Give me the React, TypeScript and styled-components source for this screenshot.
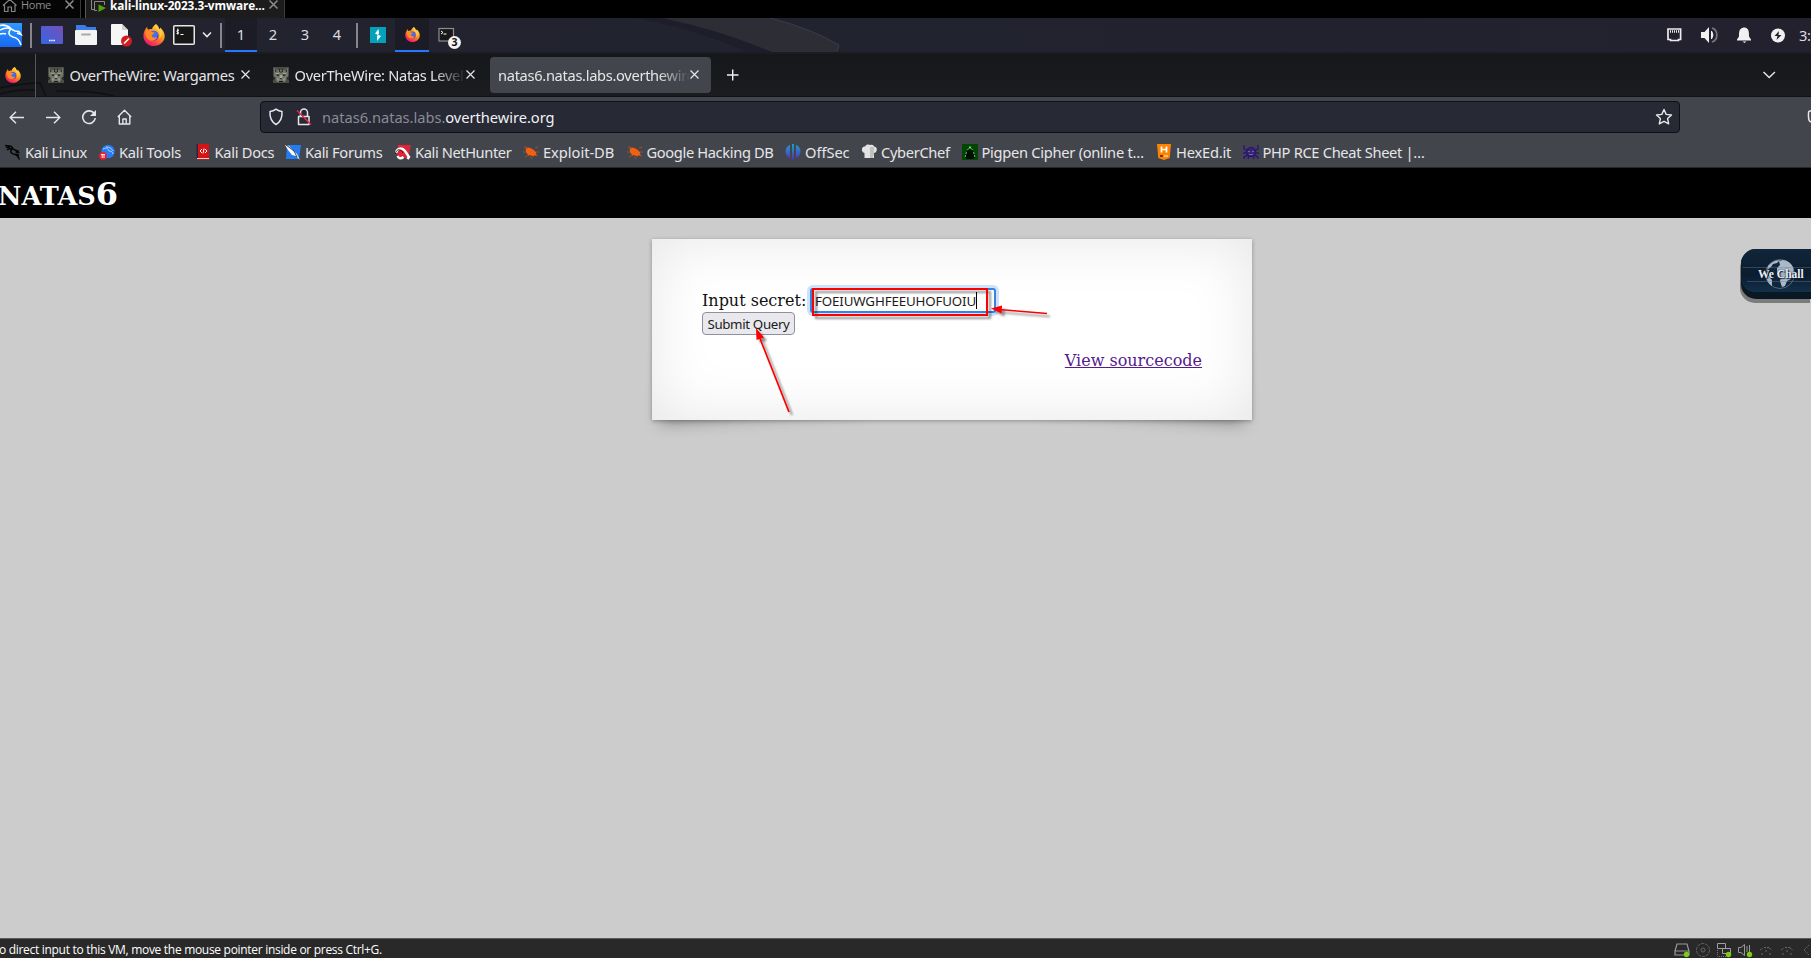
import React from "react";
import styled, { createGlobalStyle } from "styled-components";

const GlobalStyle = createGlobalStyle`
  * { box-sizing: border-box; }
  body { margin: 0; background: #cccccc; overflow: hidden; }
`;

const Screen = styled.div`
  display: flex;
  flex-direction: column;
  width: 1811px;
  height: 958px;
  overflow: hidden;
  background: #cccccc;
  font-family: "Noto Sans", sans-serif;
  svg { display: block; flex: none; }
`;

/* ---------- virtual machine window tabs ---------- */
const VmTabs = styled.div`
  display: flex;
  height: 18px;
  flex: none;
  background: #000;
`;
const VmTab = styled.div<{ $w: number; $active?: boolean }>`
  display: flex;
  align-items: flex-start;
  width: ${(p) => p.$w}px;
  height: 18px;
  background: ${(p) => (p.$active ? "#1c1c1c" : "#050505")};
  border-right: 1px solid #3a3a3a;
  border-left: ${(p) => (p.$active ? "1px solid #5a5a5a" : "0")};
  margin-right: ${(p) => (p.$active ? 0 : 4)}px;
`;
const VmLabel = styled.span<{ $bold?: boolean; $w: number }>`
  width: ${(p) => p.$w}px;
  font: ${(p) => (p.$bold ? 700 : 400)} ${(p) => (p.$bold ? 11.8 : 11)}px/10px "Open Sans", sans-serif;
  letter-spacing: ${(p) => (p.$bold ? -0.1 : -0.3)}px;
  color: ${(p) => (p.$bold ? "#fff" : "#8c8c8c")};
  white-space: nowrap;
`;

/* ---------- desktop panel ---------- */
const Panel = styled.div`
  position: relative;
  display: flex;
  align-items: center;
  height: 36px;
  flex: none;
  background: linear-gradient(90deg, #23232f, #21232f 45%, #23212e);
  border-bottom: 2px solid #1b1c21;
`;
const PanelArt = styled.svg`
  position: absolute;
  left: 620px;
  top: 0;
`;
const PanelBox = styled.div<{ $w: number; $pad?: number }>`
  display: flex;
  align-items: center;
  width: ${(p) => p.$w}px;
  padding-left: ${(p) => p.$pad ?? 0}px;
  height: 34px;
  flex: none;
`;
const Divider = styled.i`
  width: 2px;
  height: 25px;
  flex: none;
  background: #85858b;
`;
const Workspace = styled.div<{ $w: number; $active?: boolean }>`
  display: flex;
  align-items: center;
  justify-content: center;
  width: ${(p) => p.$w}px;
  height: 34px;
  font-size: 14.67px;
  color: #dcdce0;
  background: ${(p) => (p.$active ? "#1b1c26" : "transparent")};
  border-bottom: 2px solid ${(p) => (p.$active ? "#2777ff" : "transparent")};
`;
const WindowCount = styled.span`
  position: absolute;
  left: 10px;
  top: 13px;
  width: 13px;
  height: 13px;
  border-radius: 50%;
  background: #f3f3f3;
  color: #111;
  text-align: center;
  font-size: 10.5px;
  font-weight: 700;
  line-height: 13px;
`;
const WindowButton = styled.div`
  position: relative;
  width: 24px;
  height: 24px;
  margin-left: 9px;
`;
const Spacer = styled.div`
  flex: 1;
`;
const Clock = styled.span`
  width: 12px;
  font-size: 14.67px;
  letter-spacing: -0.3px;
  color: #dcdce0;
  white-space: nowrap;
`;

/* ---------- browser chrome ---------- */
const TabStrip = styled.div`
  position: relative;
  display: flex;
  align-items: center;
  height: 43px;
  flex: none;
  background: linear-gradient(#16171b, #1b1c20);
  border-bottom: 1px solid #111215;
`;
const StripArt = styled.svg`
  position: absolute;
  left: 0;
  top: 0;
`;
const PinCell = styled.div`
  position: relative;
  display: flex;
  align-items: center;
  width: 36px;
  height: 43px;
  padding-left: 5px;
  border-right: 1px solid #56575c;
`;
const Tab = styled.div<{ $w: number; $pad: number; $active?: boolean }>`
  position: relative;
  display: flex;
  align-items: center;
  width: ${(p) => p.$w}px;
  height: 36px;
  padding: 0 0 1px ${(p) => p.$pad}px;
  border-radius: 4px;
  background: ${(p) => (p.$active ? "#43454c" : "transparent")};
`;
const TabTitle = styled.span<{ $w: number; $fade?: boolean; $gap?: number }>`
  width: ${(p) => p.$w}px;
  margin-left: ${(p) => p.$gap ?? 5.5}px;
  overflow: hidden;
  white-space: nowrap;
  font-size: 14.67px;
  letter-spacing: -0.32px;
  line-height: 22px;
  color: #e6e6e8;
  mask-image: ${(p) => (p.$fade ? "linear-gradient(90deg, #000 calc(100% - 32px), transparent)" : "none")};
`;
const NavBar = styled.div`
  display: flex;
  align-items: center;
  height: 42px;
  flex: none;
  padding: 0 0 2px 8px;
  background: #43454c;
`;
const NavButton = styled.div`
  display: flex;
  align-items: center;
  justify-content: center;
  width: 18px;
  height: 32px;
  margin-right: 18px;
`;
const UrlBar = styled.div`
  display: flex;
  align-items: center;
  width: 1420px;
  height: 32px;
  margin-left: 108px;
  padding: 0 6px 0 7px;
  background: #272935;
  border: 1px solid #0f1014;
  border-radius: 4px;
`;
const UrlText = styled.span`
  margin-left: 10px;
  font-size: 14.67px;
  letter-spacing: -0.03px;
  line-height: 22px;
  color: #8b8c94;
  b { font-weight: 400; color: #f2f2f4; }
`;
const Bookmarks = styled.div`
  display: flex;
  align-items: center;
  height: 29px;
  flex: none;
  padding: 0 0 2px 5px;
  background: #43454c;
  border-bottom: 1px solid #26272b;
`;
const Bookmark = styled.div<{ $w: number; $track: number }>`
  display: flex;
  align-items: center;
  gap: 4px;
  width: ${(p) => p.$w}px;
  flex: none;
  white-space: nowrap;
  font-size: 14.67px;
  letter-spacing: ${(p) => p.$track}px;
  line-height: 22px;
  color: #e6e6e8;
`;

/* ---------- page ---------- */
const PageHeader = styled.h1`
  display: flex;
  align-items: baseline;
  margin: 0;
  height: 50px;
  flex: none;
  padding-top: 8px;
  background: #000;
  color: #fff;
  font: 700 32px/37px "DejaVu Serif", serif;
  small { font-size: 25.6px; margin-left: -2px; }
`;
const PageBody = styled.main`
  position: relative;
  flex: 1;
  padding: 21px 0 0 652px;
`;
const Card = styled.section`
  position: relative;
  z-index: 0;
  width: 600px;
  height: 181px;
  padding: 48px 50px 0;
  background: #fff;
  font: 16px/24px "DejaVu Serif", serif;
  color: #111;
  box-shadow: 0 1px 4px rgba(0, 0, 0, 0.3), inset 0 0 60px rgba(0, 0, 0, 0.1);
`;
const CardShadows = styled.div`
  position: absolute;
  left: 652px;
  top: 21px;
  width: 600px;
  height: 181px;
  &::before, &::after {
    content: "";
    position: absolute;
    bottom: 12px;
    width: 200px;
    height: 100px;
    box-shadow: 0 8px 16px rgba(0, 0, 0, 0.38);
  }
  &::before { left: 13px; transform: skew(-8deg) rotate(-4deg); }
  &::after { right: 13px; transform: skew(8deg) rotate(4deg); }
`;
const SecretRow = styled.div`
  display: flex;
  align-items: center;
  height: 27px;
`;
const SecretLabel = styled.span`
  width: 108px;
  white-space: nowrap;
`;
const SecretInput = styled.div`
  display: flex;
  align-items: center;
  width: 186px;
  height: 25px;
  padding-left: 3px;
  background: #fff;
  border: 2px solid #3584e4;
  border-radius: 3px;
  box-shadow: 0 0 0 3px #cce2fb;
  font: 13.33px/18px "Noto Sans", sans-serif;
  letter-spacing: -0.15px;
  color: #1c1c1c;
`;
const Caret = styled.i`
  width: 1px;
  height: 17px;
  background: #000;
`;
const SubmitButton = styled.button`
  display: block;
  width: 93px;
  height: 23px;
  margin-top: -2px;
  padding: 0;
  border: 1px solid #8f8f9d;
  border-radius: 4px;
  background: #e9e9ed;
  font: 13.33px/18px "Noto Sans", sans-serif;
  letter-spacing: -0.36px;
  color: #1c1c1c;
  white-space: nowrap;
`;
const SourceLink = styled.a`
  display: block;
  margin-top: 14px;
  text-align: right;
  color: #551a8b;
  text-decoration: underline;
`;
const Marks = styled.svg`
  position: absolute;
  left: 652px;
  top: 21px;
  z-index: 2;
`;
const WeChall = styled.div`
  position: absolute;
  right: 0;
  top: 31px;
  width: 70px;
  height: 50px;
  border-radius: 15px 0 0 15px;
  background: #0a1824;
  box-shadow: -1px 4px 0 #7c7c7c;
`;
const WeChallFace = styled.div`
  position: relative;
  height: 43px;
  border-radius: 15px 0 0 14px;
  background: linear-gradient(#11263a, #0b1c2f 60%, #12304a);
`;
const WeChallText = styled.span`
  position: absolute;
  left: 17px;
  top: 16px;
  font: 700 11.5px/18px "Liberation Serif", serif;
  color: #e9eef4;
  white-space: nowrap;
  text-shadow: 0 0 2px #0b1c2f, 1px 1px 1px #0b1c2f;
`;

/* ---------- status bar ---------- */
const StatusBar = styled.footer`
  display: flex;
  align-items: center;
  height: 20px;
  flex: none;
  padding-top: 2px;
  background: #292929;
  border-top: 1px solid #5c5c5c;
`;
const StatusText = styled.span`
  margin-left: -1px;
  font: 12px/16px "Open Sans", sans-serif;
  letter-spacing: -0.3px;
  color: #fff;
  white-space: nowrap;
`;
const StatusIcons = styled.div`
  display: flex;
  gap: 5px;
  margin-left: auto;
`;

/* ---------- icons ---------- */
const Firefox = ({ s, id }: { s: number; id: string }) => (
  <svg width={s} height={s} viewBox="0 0 32 32">
    <defs>
      <linearGradient id={id} x1="0.85" y1="0.1" x2="0.25" y2="1">
        <stop offset="0" stopColor="#ffe14a" />
        <stop offset="0.45" stopColor="#ff8a1f" />
        <stop offset="0.8" stopColor="#fb3350" />
        <stop offset="1" stopColor="#e01884" />
      </linearGradient>
    </defs>
    <path fill={`url(#${id})`} d="M19 0c3 2 4 5 4.500 7.500C25 8 25 6 25 5c4 4 7 8 6.500 14C31 26 24 32 16 32S1 26 .600 18C.400 12 3 8 6 4c0 2 .500 3 1.500 4.500 2-1.500 4-1.500 5.500-1C14 4 16 2 19 0z" />
    <circle cx="15.500" cy="17" r="7.200" fill="#5b3fd0" />
    <path d="M11 12c3-3 9-2 11 2l-3 8-7 2z" fill="#3f7bf0" opacity=".8" />
    <path d="M4 10c3-2 7-1 9 1.500 2 .500 3.500.500 4 1.500-1 2-4 1.500-4.500 4 1 3 5 4 8 1.500-1 5-8 8-13 4C4 19 3 14 4 10z" fill="#ff8b22" />
    <path d="M19 1c-2 5 4 7 5 12 1 4 0 7-1 9 4-3 6-8 3-13-2-3-5-4-7-8z" fill="#ffd53c" opacity=".85" />
  </svg>
);
const Cross = ({ c = "#e6e6e8", w = 1.2 }: { c?: string; w?: number }) => (
  <svg width="9" height="9" viewBox="0 0 9 9"><path d="M.500.500l8 8M8.500.500l-8 8" stroke={c} strokeWidth={w} fill="none" /></svg>
);
const Cat = () => (
  <svg width="16" height="16" viewBox="0 0 16 16">
    <path fill="#4a4d45" d="M0 0h16v16H0z" />
    <path fill="#74776b" d="M1 1l4 2h6l4-2v9l-3 5H4l-3-5z" />
    <path fill="#2b2e27" d="M2 2l2 2-2 1zM14 2l-2 2 2 1zM6 2h1v3H6zM9 2h1v3H9zM0 9l3 2-2 2H0zM16 9l-3 2 2 2h1zM7.500 4h1v2h-1z" />
    <path fill="#a2a594" d="M3 6h3v1H3zM10 6h3v1h-3zM7 8h2l.500 3h-3zM4 11l2 1-1 2zM12 11l-2 1 1 2z" />
    <path fill="#171915" d="M3.500 7.500H6v1.200H4zM10 7.500h2.500L12 8.700h-2zM7 11h2l-1 1.500zM6 14h4v1H6z" />
  </svg>
);
const Terminal = ({ w, h }: { w: number; h: number }) => (
  <svg width={w} height={h} viewBox="0 0 22 20">
    <rect x=".75" y=".75" width="20.500" height="18.500" rx="1" fill="#171718" stroke="#e8e8e8" strokeWidth="1.500" />
    <path d="M6 5.500c-2-1-3 1-1.500 1.500S6.500 9 3.500 8.500M4.800 3.500v6" stroke="#fff" fill="none" /><path d="M7.500 9.500h3" stroke="#fff" />
  </svg>
);
const Burst = () => (
  <svg width="16" height="16" viewBox="0 0 16 16">
    <path d="M1 3l4 2M0 8h4M2 13l4-2M15 12l-4-1M12 4l3-1M7 12l2 3M4 5l-1-3M13 8h3" stroke="#c6571c" strokeWidth=".8" opacity=".8" />
    <path d="M2.500 5.500L5 3.500l2 .500 2.500 1 3.500 3 .500 3.500-2-.500-1 1.500-3.500-1.500-1.500.500-2-2.500z" fill="#f2600f" />
  </svg>
);
const Shield = () => (
  <svg width="16" height="18" viewBox="0 0 16 18"><path d="M8 1.200c2 1.500 4 2.100 6 2.300.3 5-.8 10-6 13-5.200-3-6.300-8-6-13 2-.2 4-.8 6-2.300z" fill="none" stroke="#e6e6e8" strokeWidth="1.500" strokeLinejoin="round" /></svg>
);
const Star = () => (
  <svg width="18" height="18" viewBox="0 0 18 18"><path d="M9 1.500l2.200 4.900 5.300.6-3.900 3.600 1.100 5.300L9 13.300l-4.700 2.600 1.100-5.300L1.500 7l5.300-.6z" fill="none" stroke="#e6e6e8" strokeWidth="1.400" strokeLinejoin="round" /></svg>
);
const Midi = () => (
  <svg width="16" height="16" viewBox="0 0 16 16"><path d="M2 8l3-2M6 5.500h5M11 6l3 2M3 12h2M11 12h2M7 9h3" stroke="#666" strokeDasharray="2 1" fill="none" /></svg>
);

const bookmarks: { label: string; w: number; track: number; icon: React.ReactNode }[] = [
  {
    label: "Kali Linux", w: 94, track: -0.42, icon: (
      <svg width="16" height="16" viewBox="0 0 16 16"><path d="M0 1.500l6 .8 2 1.700M1 3.500l4 0M2 6q3-2 5-1.500l3 1.500 3 1 .500 1.500-3-.800M7 4.500q-3 4.500 1.500 5.500 4 .500 6 5.500M11 10l3 1.500" stroke="#050505" strokeWidth="1.500" fill="none" /></svg>
    ),
  },
  {
    label: "Kali Tools", w: 95.5, track: -0.22, icon: (
      <svg width="16" height="16" viewBox="0 0 16 16"><circle cx="9" cy="7.500" r="6.800" fill="#267cf0" /><path d="M4 5c4-2 5 0 6 2 2 0 4 1 4 3M7 3c4 0 6 2 7 4" stroke="#b9d5ff" fill="none" /><circle cx="4" cy="11.800" r="3.900" fill="#f01d2c" /><path d="M2 10.500h4M3.200 10.500V14M5 10.500V14" stroke="#fff" strokeWidth=".9" /></svg>
    ),
  },
  {
    label: "Kali Docs", w: 90.5, track: -0.27, icon: (
      <svg width="16" height="16" viewBox="0 0 16 16"><path d="M2 0h12v16H2z" fill="#d31414" /><path d="M1.500 0H3v15H1.500z" fill="#2a2540" /><path d="M2 14h12v1H2z" fill="#ddd" /><path d="M7 5L5 7l2 2M10 5l2 2-2 2M9 4.500l-1 5" stroke="#fff" fill="none" /></svg>
    ),
  },
  {
    label: "Kali Forums", w: 110, track: -0.32, icon: (
      <svg width="16" height="16" viewBox="0 0 16 16"><path d="M2 1h14l-2 14H1z" fill="#247df0" /><path d="M0 1l4 1 5 5 3 3 3 6-4-4-4-1-4-5z" fill="#fff" /><path d="M1 1l8 6 3 6" stroke="#111" strokeWidth=".8" fill="none" /></svg>
    ),
  },
  {
    label: "Kali NetHunter", w: 128, track: -0.4, icon: (
      <svg width="16" height="16" viewBox="0 0 16 16"><path d="M3 1h13l-3 13H2z" fill="#e12536" /><path d="M1 9c1-5 6-6 9-2l4 6-1.500 2M2.500 12q2 4 6 1" stroke="#fff" strokeWidth="2.400" fill="none" /><path d="M0 10c2-6 6-5 8-1" stroke="#111" fill="none" strokeWidth=".8" /></svg>
    ),
  },
  { label: "Exploit-DB", w: 103.5, track: -0.03, icon: <Burst /> },
  { label: "Google Hacking DB", w: 158.5, track: -0.36, icon: <Burst /> },
  {
    label: "OffSec", w: 76, track: -0.05, icon: (
      <svg width="16" height="16" viewBox="0 0 16 16"><defs><linearGradient id="off" x2="0" y2="1"><stop stopColor="#17a3c4" /><stop offset="1" stopColor="#5a2cc0" /></linearGradient></defs><path d="M5 1v13C-1 12-1 3 5 1zM11 1v13c6-2 6-11 0-13zM7 0h2v16H7z" fill="url(#off)" /></svg>
    ),
  },
  {
    label: "CyberChef", w: 100.5, track: -0.33, icon: (
      <svg width="16" height="16" viewBox="0 0 16 16"><path d="M3.500 14V9C-.500 8 .500 2 4 2.500 5 0 8 0 9 1c3-1 4 .500 4 1.500 4 0 3.500 6 0 6.500v5z" fill="#e3e3e3" /><path d="M9 3h4v6l-1 5H9z" fill="#bfc0c0" /></svg>
    ),
  },
  {
    label: "Pigpen Cipher (online t…", w: 194.5, track: -0.28, icon: (
      <svg width="16" height="16" viewBox="0 0 16 16"><path fill="#044404" d="M0 0h16v16H0z" /><path fill="#010d01" d="M8 2l6 11-3 2H5l-3-2z" /><path d="M3 13l1.500-5M13 13l-1.500-5M5.500 6L7 4M10.500 6L9 4" stroke="#5ee45e" strokeDasharray="2 1" fill="none" /><path d="M7 2.500h2v2H7z" fill="#62ec62" /></svg>
    ),
  },
  {
    label: "HexEd.it", w: 86.5, track: -0.2, icon: (
      <svg width="16" height="16" viewBox="0 0 16 16"><path fill="#ff8300" d="M1 0h14l-1.300 14L8 16l-5.700-2z" /><path d="M5.500 2.500v6M10.500 2.500v6M5.500 5.500h5" stroke="#fff" strokeWidth="1.700" /><path d="M4 11h3v2H4z" fill="#7a3500" /><path d="M8 12h4" stroke="#fff" /></svg>
    ),
  },
  {
    label: "PHP RCE Cheat Sheet |…", w: 200, track: -0.32, icon: (
      <svg width="16" height="16" viewBox="0 0 16 16"><circle cx="8" cy="8" r="4.500" fill="#37266b" stroke="#2c1576" strokeWidth="1.500" /><path d="M1 1v4l3 2M15 1v4l-3 2M0 9h4M16 9h-4M1 15v-2l4-2M15 15v-2l-4-2M5 15l1-3M11 15l-1-3" stroke="#2c1576" strokeWidth="1.400" fill="none" /><path d="M5 7h2v1H5zM9 7h2v1H9zM6 10h4v1H6z" fill="#7367a0" /></svg>
    ),
  },
];

export default function App() {
  return (
    <Screen>
      <GlobalStyle />
      <VmTabs>
        <VmTab $w={81}>
          <svg width="21" height="12" viewBox="0 0 21 12"><path d="M3 5.500L9.800-.500 16.500 5.500M4.500 5v6.500h3.500V7h3.500v4.500H15V5" stroke="#858585" strokeWidth="1.200" fill="none" /></svg>
          <VmLabel $w={44}>Home</VmLabel>
          <Cross c="#8c8c8c" w={1.5} />
        </VmTab>
        <VmTab $w={200} $active>
          <svg width="24" height="12" viewBox="0 0 24 12"><path d="M5.500 0v9.500H8M11 10.500H8.500V1.500h10V5" stroke="#8a8a8a" fill="none" /><path d="M12.500 4.500l7.500 3.500-7.500 4z" fill="#4fa112" /></svg>
          <VmLabel $w={159} $bold>kali-linux-2023.3-vmware...</VmLabel>
          <Cross c="#8c8c8c" w={1.5} />
        </VmTab>
      </VmTabs>

      <Panel>
        <PanelArt width="240" height="34" viewBox="0 0 240 34">
          <path d="M42 0h108q40 10 69 27l-2 7h-67Q90 12 42 0z" fill="#2d2d35" />
          <path d="M18 0q70 15 108 34h26Q100 12 42 0z" fill="#1e1e2a" />
          <path d="M150 0q40 10 69 27l-2 7" stroke="#3b3c46" fill="none" />
        </PanelArt>
        <PanelBox $w={30}>
          <svg width="24" height="26" viewBox="0 0 24 26">
            <defs><linearGradient id="kl" x2="0" y2="1"><stop stopColor="#2f9cff" /><stop offset="1" stopColor="#1767f0" /></linearGradient></defs>
            <path d="M0 1h22v22q0 2-2 2H0z" fill="url(#kl)" />
            <path d="M0 3.500q6-1.500 11 3M0 8q6-3 10-1.500l5 2.500 4 .500 2 3-4-1.500M10.500 7q-4 6 2.500 8 6 1 8 8M0 12q4-1 6 0" stroke="#fff" strokeWidth="1.500" fill="none" />
          </svg>
        </PanelBox>
        <Divider />
        <PanelBox $w={34} $pad={9}>
          <svg width="22" height="18" viewBox="0 0 22 18"><defs><linearGradient id="dk" x1="0" y1="1" x2="1" y2="0"><stop stopColor="#3566e4" /><stop offset="1" stopColor="#7550b8" /></linearGradient></defs><rect width="22" height="18" rx="1" fill="url(#dk)" /><path d="M8 14.500h6" stroke="#fff" strokeWidth="1.500" strokeDasharray="1.500 .7" /></svg>
        </PanelBox>
        <PanelBox $w={36} $pad={9}>
          <svg width="22" height="20" viewBox="0 0 22 20"><path d="M1 0h9l2 2h9v6H1z" fill="#3b7ce9" /><rect y="5" width="22" height="15" rx="1" fill="#f4f4f4" /><path d="M7 9.500h8" stroke="#aaa" strokeWidth="2" strokeLinecap="round" /></svg>
        </PanelBox>
        <PanelBox $w={34} $pad={9}>
          <svg width="22" height="23" viewBox="0 0 22 23"><path d="M0 1q0-1 1-1h10l6 6v15H1q-1 0-1-1z" fill="#f6f6f6" /><path d="M11 0l6 6h-6z" fill="#cfcfcf" /><circle cx="15.500" cy="17" r="5.500" fill="#d31b1f" /><path d="M13 19.500l5-5" stroke="#fff" strokeWidth="1.600" /></svg>
        </PanelBox>
        <PanelBox $w={37} $pad={7}><Firefox s={22} id="f1" /></PanelBox>
        <PanelBox $w={47}>
          <Terminal w={22} h={20} />
          <svg width="24" height="10" viewBox="0 0 24 10"><path d="M8 2.500l4 4 4-4" stroke="#e6e6e6" strokeWidth="1.600" fill="none" /></svg>
        </PanelBox>
        <Divider />
        <PanelBox $w={134} $pad={3}>
          <Workspace $w={32} $active>1</Workspace>
          <Workspace $w={32}>2</Workspace>
          <Workspace $w={32}>3</Workspace>
          <Workspace $w={32}>4</Workspace>
        </PanelBox>
        <Divider />
        <PanelBox $w={37} $pad={12}>
          <svg width="16" height="16" viewBox="0 0 16 16"><path fill="#02a3ba" d="M0 0h16v16H0z" /><path d="M8.500 2L5 6.500 8 8l-1 1v5l4-5-3-1.500 1-1z" fill="#fff" /></svg>
        </PanelBox>
        <Workspace $w={34} $active><Firefox s={15} id="f2" /></Workspace>
        <WindowButton>
          <svg width="24" height="24" viewBox="0 0 24 24"><rect x="1" y="5.500" width="14.500" height="12.500" fill="#18181b" stroke="#8e8e90" strokeWidth="1.200" /><path d="M3 8l2 1.500L3 11M5.500 11h3" stroke="#fff" fill="none" /></svg>
          <WindowCount>3</WindowCount>
        </WindowButton>
        <Spacer />
        <PanelBox $w={34}>
          <svg width="15" height="14" viewBox="0 0 15 14"><path d="M1 1h12.600v10.500H11.500v1h-8v-1H1z" fill="none" stroke="#ececec" strokeWidth="1.700" /><path d="M3 3.500h9" stroke="#ececec" strokeWidth="2.500" strokeDasharray="1 1" /></svg>
        </PanelBox>
        <PanelBox $w={36}>
          <svg width="18" height="16" viewBox="0 0 18 16"><path d="M0 5h3.500L8 0v16l-4.500-5H0z" fill="#f0f0f0" /><path d="M10.500 4q3 4 0 8z" fill="#f0f0f0" stroke="#f0f0f0" /><path d="M11 1c6.500 2 6.500 12 0 14" stroke="#77777f" strokeWidth="1.700" fill="none" /></svg>
        </PanelBox>
        <PanelBox $w={34}>
          <svg width="15" height="16" viewBox="0 0 15 16"><path d="M6.500.500h1.500C12 1.500 12 5 12 9.500L14 12.500v1H0v-1l2-3c0-4.500 0-8 4.500-9zM5.500 14.500h4L7.500 16z" fill="#f0f0f0" /></svg>
        </PanelBox>
        <PanelBox $w={28}>
          <svg width="15" height="15" viewBox="0 0 15 15"><circle cx="7" cy="7.500" r="7" fill="#f0f0f0" /><path d="M8 3L3.500 8h3l-1 4 5-5h-3z" fill="#22212e" /></svg>
        </PanelBox>
        <Clock>3:</Clock>
      </Panel>

      <TabStrip>
        <StripArt width="160" height="43" viewBox="0 0 160 43">
          <path d="M0 34q24-5 40-5l6 14M0 40q20-5 36-4M56 37q45 0 60 6" stroke="#0f1013" strokeWidth="1.500" fill="none" />
        </StripArt>
        <PinCell><Firefox s={16} id="f3" /></PinCell>
        <Tab $w={225} $pad={12}><Cat /><TabTitle $w={171}>OverTheWire: Wargames</TabTitle><Cross /></Tab>
        <Tab $w={229} $pad={12}><Cat /><TabTitle $w={171} $fade>OverTheWire: Natas Level 5</TabTitle><Cross /></Tab>
        <Tab $w={221} $pad={8} $active><TabTitle $w={192} $gap={0} $fade>natas6.natas.labs.overthewire.org</TabTitle><Cross /></Tab>
        <svg width="28" height="12" viewBox="0 0 28 12"><path d="M16 6h11.500M21.700.500v11" stroke="#f0f0f0" strokeWidth="1.400" /></svg>
        <Spacer />
        <svg width="48" height="10" viewBox="0 0 48 10"><path d="M.500 2l5.700 5.500 5.700-5.500" stroke="#e6e6e8" strokeWidth="1.400" fill="none" /></svg>
      </TabStrip>

      <NavBar>
        <NavButton><svg width="16" height="14" viewBox="0 0 16 14"><path d="M15 7.500H1.700M7 1.700L1.200 7.500l5.800 5.800" stroke="#e6e6e8" strokeWidth="1.400" fill="none" /></svg></NavButton>
        <NavButton><svg width="16" height="14" viewBox="0 0 16 14"><path d="M1 7.500h13.500M9 1.700l5.800 5.800L9 13.300" stroke="#e6e6e8" strokeWidth="1.400" fill="none" /></svg></NavButton>
        <NavButton><svg width="16" height="16" viewBox="0 0 16 16"><path d="M13.500 5a6.300 6.300 0 1 0 .8 4" stroke="#e6e6e8" strokeWidth="1.600" fill="none" /><path d="M15 1v6H9z" fill="#e6e6e8" /></svg></NavButton>
        <NavButton><svg width="16" height="16" viewBox="0 0 16 16"><path d="M.800 8L7.500 1.200 14.200 8M2.300 7v8h10.500V7M5.900 15v-5h3.300v5" stroke="#e6e6e8" strokeWidth="1.400" fill="none" strokeLinejoin="round" /></svg></NavButton>
        <UrlBar>
          <Shield />
          <svg width="28" height="18" viewBox="-12 0 28 18"><path d="M4.500 8V4.500a3.500 3.500 0 0 1 7 0V8M2.500 8.500h10.500v8H2.500z" stroke="#e6e6e8" strokeWidth="1.500" fill="none" strokeLinejoin="round" /><path d="M1 2.500L15 16.500" stroke="#e22850" strokeWidth="1.500" /></svg>
          <UrlText>natas6.natas.labs.<b>overthewire.org</b></UrlText>
          <Spacer />
          <Star />
        </UrlBar>
        <Spacer />
        <svg width="4" height="16" viewBox="0 0 4 16"><path d="M4 2H3Q1.500 2 1.500 4v4q0 4 2.500 5" stroke="#e6e6e8" strokeWidth="1.500" fill="none" /></svg>
      </NavBar>
      <Bookmarks>
        {bookmarks.map((b) => (
          <Bookmark key={b.label} $w={b.w} $track={b.track}>{b.icon}{b.label}</Bookmark>
        ))}
      </Bookmarks>

      <PageHeader><small>NATAS</small>6</PageHeader>
      <PageBody>
        <CardShadows />
        <Card>
          <SecretRow>
            <SecretLabel>Input secret:</SecretLabel>
            <SecretInput>FOEIUWGHFEEUHOFUOIU<Caret /></SecretInput>
          </SecretRow>
          <SubmitButton>Submit Query</SubmitButton>
          <SourceLink>View sourcecode</SourceLink>
        </Card>
        <Marks width="600" height="181" viewBox="0 0 600 181">
          <defs><filter id="ds" x="-20%" y="-20%" width="150%" height="150%"><feDropShadow dx="3" dy="3" stdDeviation="1.300" floodColor="#000" floodOpacity=".45" /></filter></defs>
          <g filter="url(#ds)">
            <path d="M161 50h174v26H161z" fill="none" stroke="#fa0505" strokeWidth="2" />
            <path d="M137 173L107 97" stroke="#fa0505" strokeWidth="1.700" />
            <path d="M104 89l8 9.500-7.500 2.500z" fill="#fa0505" />
            <path d="M395 74.500L347 70.500" stroke="#fa0505" strokeWidth="1.700" />
            <path d="M339 69.500l11-3-.5 8z" fill="#fa0505" />
          </g>
        </Marks>
        <WeChall>
          <WeChallFace>
            <svg width="70" height="43" viewBox="0 0 70 43">
              <circle cx="39" cy="25" r="14.500" fill="#12263b" stroke="#6d839a" strokeWidth=".7" />
              <path d="M27 17q5-6 12-6l-3 3-4 1-2 3-4 3zM38 12l4-1q7 1 10 7l1 7-3 5-4 2-2 5-3 1-2-6 1-4-4-3 0-6 3-3zM25 27l3 0 3 4v6q-5-3-6-10z" fill="#a9b9ca" />
              <path d="M2 18.500h68M6 32.500h64" stroke="#6b8299" strokeOpacity=".4" />
            </svg>
            <WeChallText>We Chall</WeChallText>
          </WeChallFace>
        </WeChall>
      </PageBody>

      <StatusBar>
        <StatusText>o direct input to this VM, move the mouse pointer inside or press Ctrl+G.</StatusText>
        <StatusIcons>
          <svg width="16" height="16" viewBox="0 0 16 16"><path d="M1 9l2-7h10l2 7v4H1zM1 9h14" stroke="#9a9a9a" fill="none" strokeWidth="1.200" /><circle cx="12.500" cy="12.500" r="2.700" fill="#7ccd12" /></svg>
          <svg width="16" height="16" viewBox="0 0 16 16"><circle cx="8" cy="8" r="6.500" stroke="#666" fill="none" strokeDasharray="3 1" /><circle cx="8" cy="8" r="2" stroke="#666" fill="none" /></svg>
          <svg width="16" height="16" viewBox="0 0 16 16"><path d="M1.500 1.500h8v5h-8zM6.500 6.500h8v5h-8z" stroke="#a0a0a0" fill="#292929" /><path d="M1.500 8v6.500H10" stroke="#777" fill="none" strokeDasharray="1 1" /><circle cx="12.500" cy="12.500" r="2.700" fill="#7ccd12" /></svg>
          <svg width="16" height="16" viewBox="0 0 16 16"><path d="M1.500 5.500H4l3.500-3v11L4 10.500H1.500zM10 4v6M12.500 3v8" stroke="#999" fill="none" /><circle cx="12.500" cy="12.500" r="2.700" fill="#7ccd12" /></svg>
          <Midi />
          <Midi />
          <svg width="11" height="16" viewBox="0 0 11 16"><path d="M9 3L4 8l5 5" stroke="#666" strokeDasharray="2 1" fill="none" /></svg>
        </StatusIcons>
      </StatusBar>
    </Screen>
  );
}
